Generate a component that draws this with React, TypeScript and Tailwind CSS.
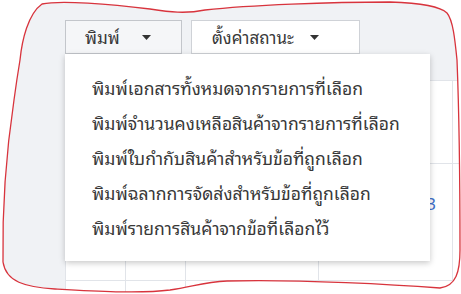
const menuItems = [
  "พิมพ์เอกสารทั้งหมดจากรายการที่เลือก",
  "พิมพ์จำนวนคงเหลือสินค้าจากรายการที่เลือก",
  "พิมพ์ใบกำกับสินค้าสำหรับข้อที่ถูกเลือก",
  "พิมพ์ฉลากการจัดส่งสำหรับข้อที่ถูกเลือก",
  "พิมพ์รายการสินค้าจากข้อที่เลือกไว้",
];

function Caret() {
  return (
    <svg width="9" height="5" viewBox="0 0 9 5" aria-hidden>
      <path d="M0 0h9L4.5 5z" fill="#333" />
    </svg>
  );
}

// hand-drawn red marker loop that was scribbled over the screenshot
const loop =
  "M20 60 C22 40, 28 14, 42 4 C60 0, 110 4, 150 9 C170 12, 185 14, 205 10 C250 5, 330 2, 390 2 C420 3, 440 6, 447 13 C453 20, 455 40, 457 60 C459 110, 460 170, 460 250 C460 272, 456 286, 440 288 C400 285, 300 279, 227 281 C205 282, 195 286, 170 290 C140 294, 90 291, 55 289 C25 287, 6 282, 3 262 C2 200, 8 140, 14 100 C16 85, 18 72, 20 60 Z";

const cell = "border border-[#e1e4e9]";

export default function App() {
  return (
    <div className="relative h-[294px] w-[461px] overflow-hidden bg-[#f0f2f5] pl-[65px] pt-[20px] font-[Tahoma,'Leelawadee_UI','Noto_Sans_Thai_Looped',Loma,Garuda,Waree,'Noto_Sans_Thai','Noto_Sans',sans-serif] text-[#383838]">
      <div className="flex gap-[9px]">
        <button className="flex h-[34px] w-[117px] items-center gap-[22px] border border-[#c3c6cb] bg-[#f5f6f8] pl-[19px] text-[17px] font-normal">
          <span>พิมพ์</span>
          <Caret />
        </button>
        <button className="flex h-[34px] w-[169px] items-center gap-[16px] border border-[#cfd2d7] bg-white pl-[20px] text-[17px] font-normal">
          <span>ตั้งค่าสถานะ</span>
          <Caret />
        </button>
      </div>

      <table className="mt-[26px] w-[400px] table-fixed border-collapse bg-white">
        <colgroup>
          <col className="w-[60px]" />
          <col className="w-[60px]" />
          <col className="w-[133px]" />
          <col className="w-[134px]" />
          <col className="w-[13px]" />
        </colgroup>
        <tbody>
          <tr className="h-[83px]">
            <td className={cell} />
            <td className={cell} />
            <td className={cell} />
            <td className={cell} />
            <td className={cell} />
          </tr>
          <tr className="h-[117px]">
            <td className={cell} />
            <td className={cell} />
            <td className={cell} />
            <td className={`${cell} pr-[16px] pt-[26px] text-right align-top text-[17px] text-[#3f6fc9]`}>1,233</td>
            <td className={cell} />
          </tr>
          <tr className="h-[40px]">
            <td className={cell} />
            <td className={cell} />
            <td className={cell} />
            <td className={cell} />
            <td className={cell} />
          </tr>
        </tbody>
      </table>

      <ul className="absolute left-[65px] top-[54px] w-[365px] bg-white py-[16px] shadow-[0_2px_6px_rgba(0,0,0,0.22)]">
        {menuItems.map((item) => (
          <li key={item} className="flex h-[35px] items-center pl-[27px] text-[17.5px] font-normal">
            {item}
          </li>
        ))}
      </ul>

      <svg className="pointer-events-none absolute inset-0" width="461" height="294" viewBox="0 0 461 294" aria-hidden>
        <path d={`M0 0H461V294H0Z ${loop}`} fill="#fff" fillRule="evenodd" />
        <path d={loop} fill="none" stroke="#d8343d" strokeWidth="1.3" />
      </svg>
    </div>
  );
}
